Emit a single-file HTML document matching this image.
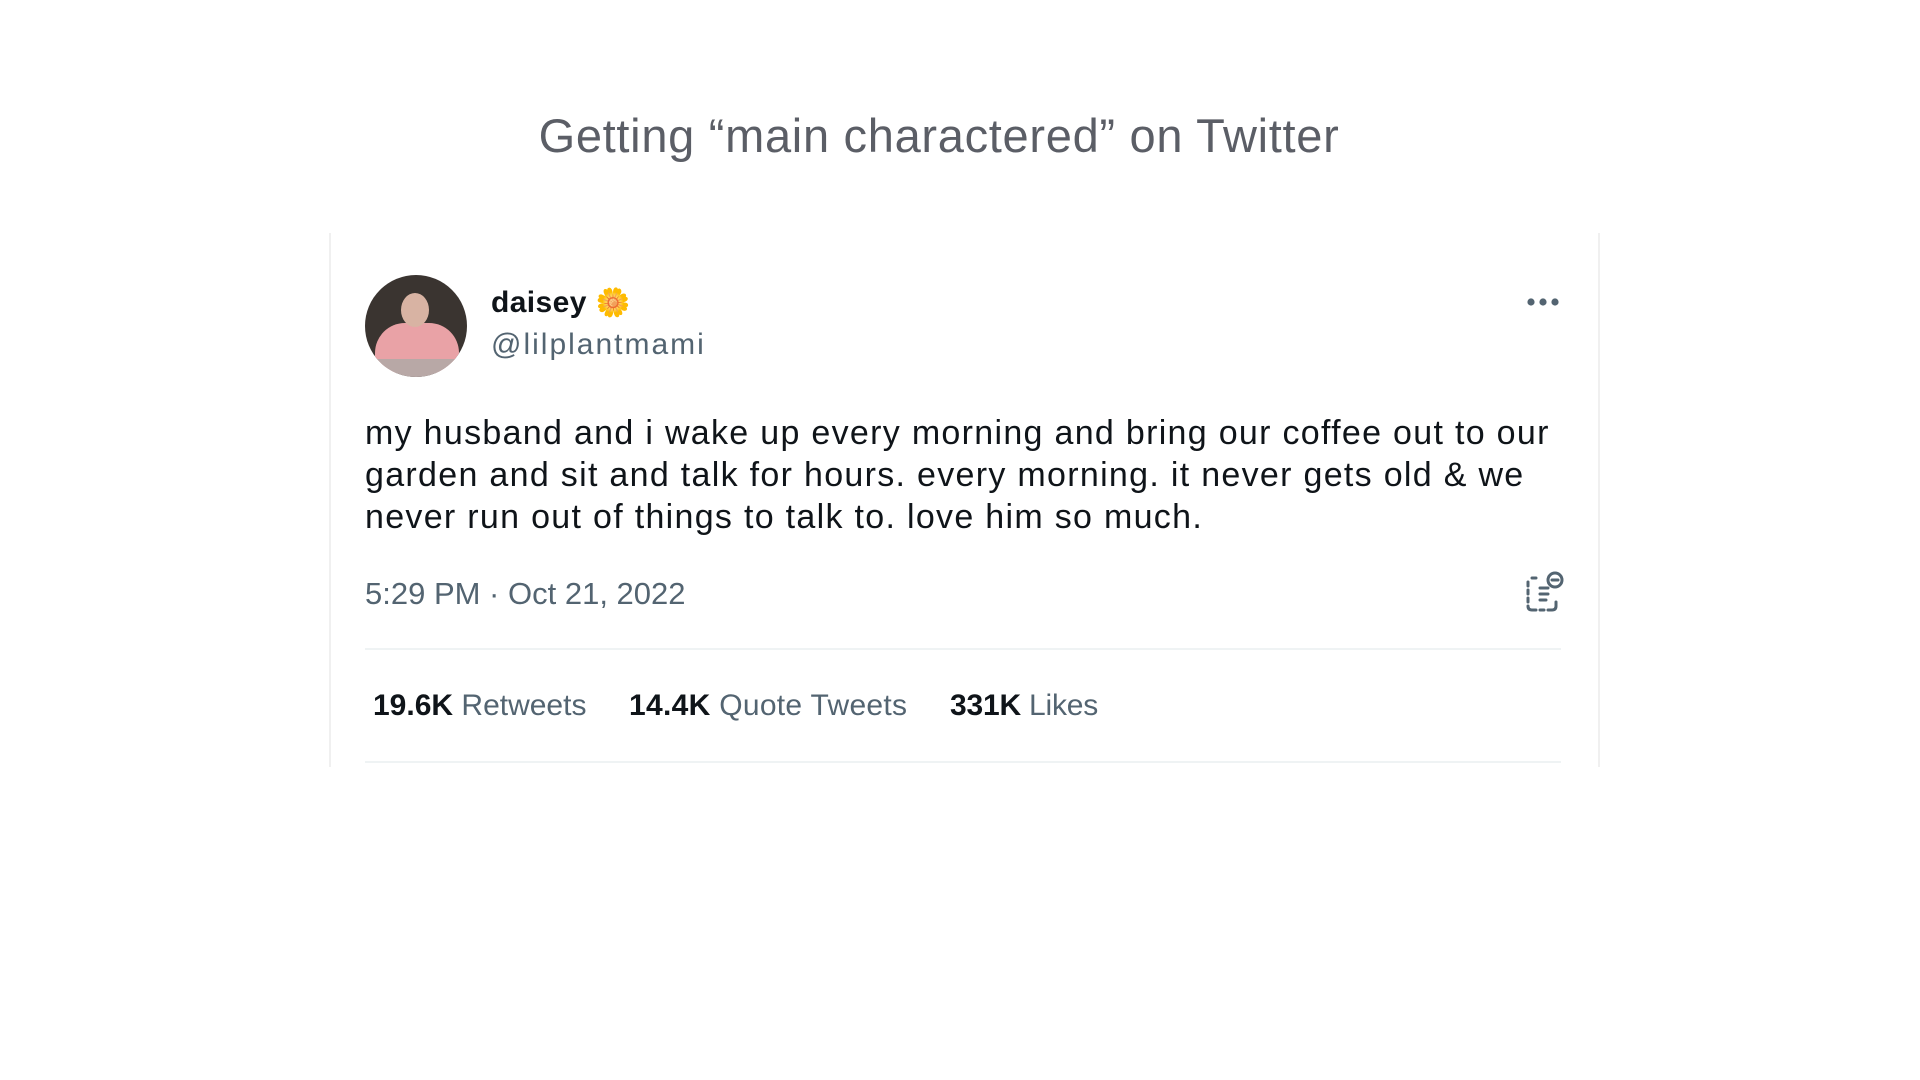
<!DOCTYPE html>
<html><head><style>
body{margin:0;width:1920px;height:1080px;background:#fff;position:relative;font-family:"Liberation Sans",sans-serif;overflow:hidden}
.a{position:absolute;white-space:nowrap}
</style></head><body>
<div class="a" style="left:0;width:1878px;top:108px;text-align:center;font-size:47px;color:#5b5e66;letter-spacing:0.7px">Getting “main charactered” on Twitter</div>
<div class="a" style="left:329px;top:233px;width:1267px;height:534px;border-left:2px solid #f0f0f0;border-right:2px solid #f0f0f0"></div>
<div class="a" style="left:365px;top:275px;width:102px;height:102px;border-radius:50%;overflow:hidden;background:#3a3430">
 <div style="position:absolute;left:10px;top:48px;width:84px;height:50px;background:#e9a2a6;border-radius:30px 30px 10px 10px"></div>
 <div style="position:absolute;left:36px;top:18px;width:28px;height:34px;background:#d8b3a3;border-radius:50%"></div>
 <div style="position:absolute;left:10px;top:84px;width:84px;height:18px;background:#b8a8a6"></div>
</div>
<div class="a" style="left:491px;top:286px;font-size:30px;font-weight:bold;color:#0f1419;letter-spacing:0.4px">daisey <span style="font-size:28px">🌼</span></div>
<div class="a" style="left:491px;top:328px;font-size:30px;color:#536471;letter-spacing:2px">@lilplantmami</div>
<svg class="a" style="left:1526px;top:297px" width="34" height="10"><circle cx="5" cy="5" r="3.6" fill="#536471"/><circle cx="17" cy="5" r="3.6" fill="#536471"/><circle cx="29" cy="5" r="3.6" fill="#536471"/></svg>
<div class="a" style="left:365px;top:412px;font-size:34px;line-height:42px;color:#0f1419;letter-spacing:1.3px">my husband and i wake up every morning and bring our coffee out to our<br>garden and sit and talk for hours. every morning. it never gets old &amp; we<br>never run out of things to talk to. love him so much.</div>
<div class="a" style="left:365px;top:576px;font-size:31px;color:#536471">5:29 PM · Oct 21, 2022</div>
<svg class="a" style="left:1522px;top:570px" width="44" height="44" viewBox="0 0 44 44" fill="none" stroke="#536471" stroke-width="3" stroke-linecap="round"><path d="M6 12v4M6 20v4M6 28v4M6 36q0 4 4 4h4M18 40h4M26 40h4q4 0 4-4v-4M10 8h4M18 18h8M18 24h8M18 30h6"/><circle cx="33" cy="10" r="7"/><path d="M30 10h6"/></svg>
<div class="a" style="left:365px;top:648px;width:1196px;height:2px;background:#eff3f4"></div>
<div class="a" style="left:373px;top:689px;font-size:30px;color:#536471"><b style="color:#0f1419">19.6K</b> Retweets</div>
<div class="a" style="left:629px;top:689px;font-size:30px;color:#536471;letter-spacing:0.3px"><b style="color:#0f1419">14.4K</b> Quote Tweets</div>
<div class="a" style="left:950px;top:689px;font-size:30px;color:#536471;letter-spacing:-0.2px"><b style="color:#0f1419">331K</b> Likes</div>
<div class="a" style="left:365px;top:761px;width:1196px;height:2px;background:#eff3f4"></div>
</body></html>
